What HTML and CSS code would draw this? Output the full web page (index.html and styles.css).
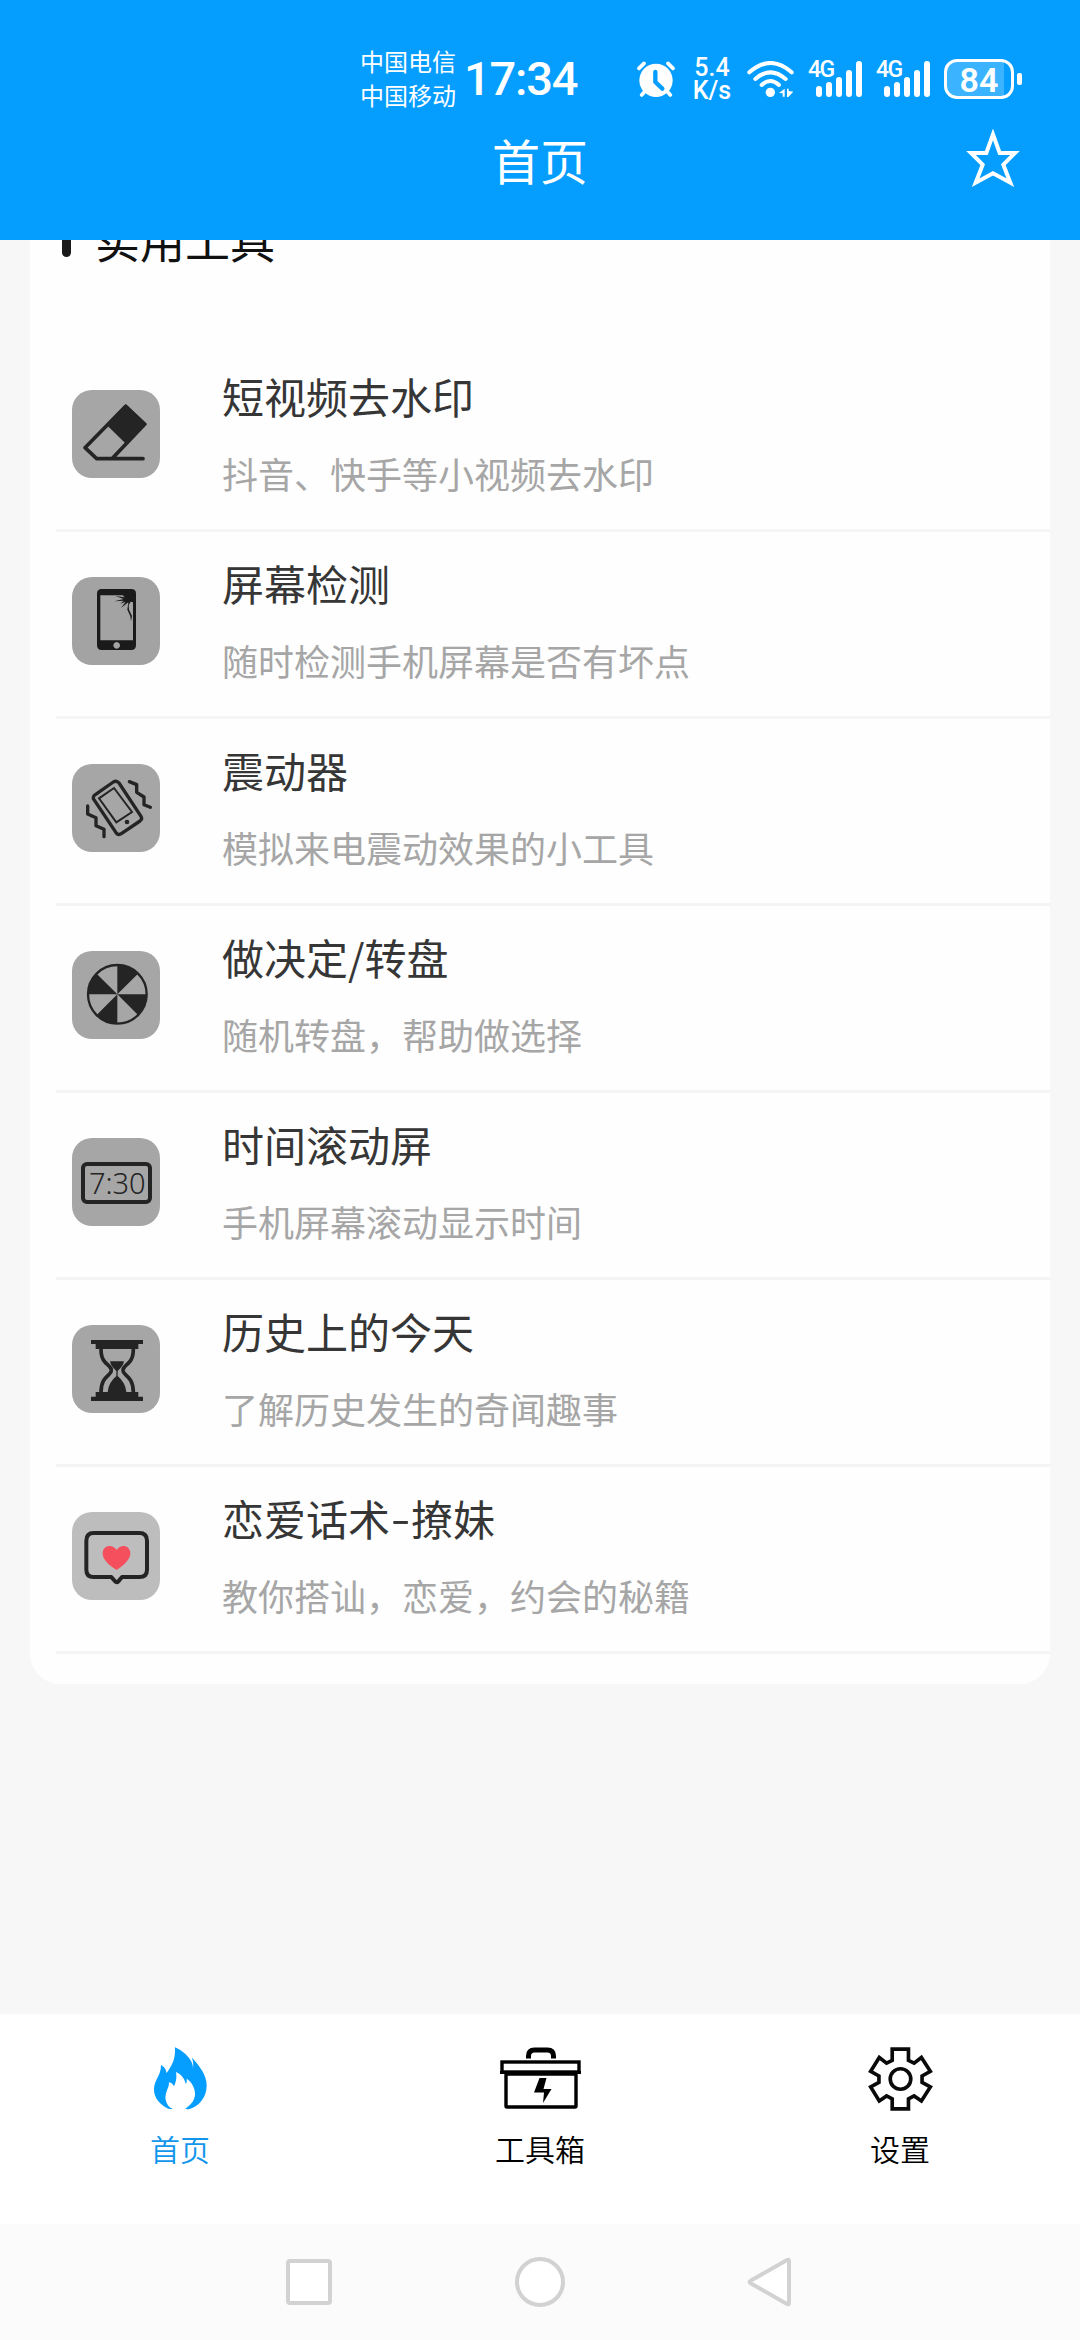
FILE: index.html
```html
<!DOCTYPE html>
<html lang="zh-CN">
<head>
<meta charset="utf-8">
<title>首页</title>
<link rel="stylesheet" href="styles.css">
</head>
<body>
<div class="app">
  <header class="header">
    <div class="status">
      <div class="carriers"><span>中国电信</span><span>中国移动</span></div>
      <div class="time">17:34</div>
      <svg class="alarm" viewBox="0 0 114 108" width="38" height="36">
        <g fill="none" stroke="#fff" stroke-width="11" stroke-linecap="round"><path d="M6 22 21 7M93 7l15 15M24 91 14 102M90 91l10 11"/></g>
        <circle cx="57" cy="58" r="50" fill="#fff"/>
        <path d="M55 33v30l21 20" fill="none" stroke="#059eff" stroke-width="13" stroke-linecap="round" stroke-linejoin="round"/>
      </svg>
      <div class="speed"><span>5.4</span><span>K/s</span></div>
      <svg class="wifi" viewBox="0 0 141 108" width="47" height="36">
        <g fill="none" stroke="#fff" stroke-width="12" stroke-linecap="round"><path d="M7 34Q70-22 134 34M25 54Q70 14 116 54M44 72Q70 48 96 72"/></g>
        <circle cx="70" cy="94" r="14" fill="#fff"/>
        <path d="M96 96 113 83v24h-6V97ZM120 83h5v7l14 2-15 16h-4Z" fill="#fff"/>
      </svg>
      <div class="signal"><span class="net">4G</span>
        <svg viewBox="0 0 46 36" width="46" height="36" fill="#fff"><rect y="25" width="6" height="11" rx="3"/><rect x="10" y="21" width="6" height="15" rx="3"/><rect x="20" y="16" width="6" height="20" rx="3"/><rect x="30" y="9" width="6" height="27" rx="3"/><rect x="40" width="6" height="36" rx="3"/></svg>
      </div>
      <div class="signal"><span class="net">4G</span>
        <svg viewBox="0 0 46 36" width="46" height="36" fill="#fff"><rect y="25" width="6" height="11" rx="3"/><rect x="10" y="21" width="6" height="15" rx="3"/><rect x="20" y="16" width="6" height="20" rx="3"/><rect x="30" y="9" width="6" height="27" rx="3"/><rect x="40" width="6" height="36" rx="3"/></svg>
      </div>
      <div class="battery">84</div>
      <div class="cap"></div>
    </div>
    <div class="bar">
      <h1>首页</h1>
      <svg class="star" viewBox="0 0 162 174" width="54" height="58"><path d="M81 16 101 72H147L112 107 133 161 81 133 29 161 50 107 15 72H61Z" fill="none" stroke="#fff" stroke-width="12"/></svg>
    </div>
  </header>

  <main class="content">
    <section class="card">
      <div class="section"><i class="mark"></i><h2>实用工具</h2></div>
      <ul class="list">
        <li class="row">
          <svg class="ico" viewBox="0 0 264 264"><g fill="none" stroke="#242424" stroke-width="11" stroke-linecap="round" stroke-linejoin="round"><path d="M39 173 161 49 218 103 122 204M39 173 74 206H213"/></g><path d="M161 42 225 102 160 160 105 106Z" fill="#242424"/></svg>
          <div class="info"><h3>短视频去水印</h3><p>抖音、快手等小视频去水印</p></div>
        </li>
        <li class="row">
          <svg class="ico ico-screen" viewBox="0 0 264 264"><path fill-rule="evenodd" fill="#1a1a1a" d="M89 36h89q14 0 14 14v155q0 14-14 14H89q-14 0-14-14V50q0-14 14-14ZM85 55v135h98V55ZM134 195a10 10 0 1 0 .1 0Z"/><path d="M152 54h32v22l-8-2-6 10 1 14 9 19-3 16-2-15-9-20 3-22-22 17 14-19-16 6 10-9-28 2 28-7-25-9 28 4Z" fill="#1a1a1a"/></svg>
          <div class="info"><h3>屏幕检测</h3><p>随时检测手机屏幕是否有坏点</p></div>
        </li>
        <li class="row">
          <svg class="ico" viewBox="0 0 264 264"><g fill="none" stroke="#242424" stroke-width="10" stroke-linejoin="round" stroke-linecap="round"><path d="M124 54 70 92q-10 7-4 15l66 99q7 9 16 3l56-38q8-6 3-14L141 57q-7-9-17-3Z"/><path d="M172 53 194 62V85L216 99V122L235 130M47 126V150L72 161V185L96 196V218"/></g><path d="M126 72 180 144 133 175 81 103Z" fill="none" stroke="#242424" stroke-width="6"/><circle cx="165" cy="174" r="7" fill="#242424"/></svg>
          <div class="info"><h3>震动器</h3><p>模拟来电震动效果的小工具</p></div>
        </li>
        <li class="row">
          <svg class="ico" viewBox="0 0 264 264"><circle cx="136" cy="130" r="88" fill="none" stroke="#242424" stroke-width="7"/><path fill="#242424" d="M136 130V42A88 88 0 0 1 198 68ZM136 130H224A88 88 0 0 1 198 192ZM136 130V218A88 88 0 0 1 74 192ZM136 130H48A88 88 0 0 1 74 68Z"/></svg>
          <div class="info"><h3>做决定/转盘</h3><p>随机转盘，帮助做选择</p></div>
        </li>
        <li class="row">
          <svg class="ico" viewBox="0 0 264 264"><rect x="33" y="78" width="201" height="114" rx="12" fill="none" stroke="#242424" stroke-width="12"/><text class="digits" x="51" y="168" textLength="170">7:30</text></svg>
          <div class="info"><h3>时间滚动屏</h3><p>手机屏幕滚动显示时间</p></div>
        </li>
        <li class="row">
          <svg class="ico" viewBox="0 0 264 264"><g fill="#242424"><path d="M57 45H213V57H199V72H71V57H57ZM71 201H199V215H213V228H57V215H71ZM114 109h42q-2 14-19 29v15q24 20 26 48h-56q2-28 26-48v-15q-17-15-19-29Z"/></g><path d="M87 72C87 104 99 113 112 124Q124 136 112 147C99 159 87 170 87 202M184 72C184 104 172 113 159 124Q147 136 159 147C172 159 184 170 184 202" fill="none" stroke="#242424" stroke-width="11"/></svg>
          <div class="info"><h3>历史上的今天</h3><p>了解历史发生的奇闻趣事</p></div>
        </li>
        <li class="row">
          <svg class="ico ico-chat" viewBox="0 0 264 264"><path d="M65 63H202Q225 63 225 86V173Q225 195 202 195H150L139 208Q134 214 129 208L118 195H65Q43 195 43 173V86Q43 63 65 63Z" fill="none" stroke="#242424" stroke-width="12" stroke-linejoin="round"/><path d="M134 174C108 158 92 142 92 124C92 100 121 94 134 114C146 94 175 100 175 124C175 142 158 158 134 174Z" fill="#f54f5d"/></svg>
          <div class="info"><h3>恋爱话术<span class="dash">-</span>撩妹</h3><p>教你搭讪，恋爱，约会的秘籍</p></div>
        </li>
      </ul>
    </section>
  </main>

  <nav class="tabs">
    <a class="tab active">
      <svg viewBox="0 0 160 192" width="53" height="64"><path fill="#059eff" d="M63 0C92 12 122 42 117 66Q121 50 114 31C138 57 159 84 159 116C159 152 134 180 105 187Q98 188 94 186C112 174 128 156 123 132C120 116 110 102 99 95Q100 104 96 111C92 94 82 82 66 75C70 90 66 108 60 118Q56 108 45 106C47 122 32 136 35 158C38 172 45 182 56 186Q50 188 42 185C18 174 0 154 0 128C0 98 22 86 21 54Q36 62 38 78C56 54 66 30 63 0Z"/></svg>
      <span>首页</span>
    </a>
    <a class="tab">
      <svg viewBox="0 0 81 64" width="81" height="64" fill="none" stroke="#000"><path d="M28.500 11.500V9q0-6 6-6h13q6 0 6 6v2.500" stroke-width="5"/><rect x="2" y="15" width="77" height="10" stroke-width="3.400"/><path d="M0 25.500H81" stroke-width="3"/><rect x="6" y="27" width="70" height="33" rx="1" stroke-width="3.400"/><path d="M39.500 31h7l-3 11h8L43 56l1-10.500H34Z" fill="#000" stroke="none"/></svg>
      <span>工具箱</span>
    </a>
    <a class="tab">
      <svg viewBox="0 0 196 192" width="65" height="64" fill="none" stroke="#0a0a0a" stroke-width="11"><path d="M73 6H122V40L139 48 161 31 188 73 163 87V106L188 120 161 162 139 147 122 156V186H73V156L56 147 34 162 8 120 33 106V87L8 73 34 31 56 48 73 40Z"/><circle cx="98" cy="96" r="31"/></svg>
      <span>设置</span>
    </a>
  </nav>
  <div class="sysnav">
    <svg viewBox="0 0 50 52" width="50" height="52"><rect x="4" y="5" width="42" height="42" rx="2"/></svg>
    <svg viewBox="0 0 50 52" width="50" height="52"><circle cx="25" cy="26" r="23"/></svg>
    <svg viewBox="0 0 50 52" width="50" height="52"><path d="M43 5V47Q43 49 41 48L5 27.500Q2 26 5 24.500L41 4Q43 3 43 5Z"/></svg>
  </div>
</div>
</body>
</html>
```
FILE: styles.css
```css
* { box-sizing: border-box; margin: 0; padding: 0; }
body { background: #f7f7f7; font-family: "Noto Sans CJK SC", sans-serif; }
h1, h2, h3 { font-weight: 400; }
svg { display: block; flex: none; }

.app { width: 1080px; height: 2340px; display: flex; flex-direction: column; overflow: hidden; }

.header { height: 240px; flex: none; background: #059eff; color: #fff; }
.status { height: 106px; padding: 52px 0 0 360px; display: flex; align-items: center; }
.carriers { width: 96px; margin-top: -3px; display: flex; flex-direction: column; font-size: 24px; line-height: 34px; white-space: nowrap; }
.time { width: 115px; margin-left: 8px; font: 500 47px/54px Roboto, sans-serif; letter-spacing: -1.2px; white-space: nowrap; }
.alarm { margin-left: 58px; }
.speed { width: 40px; margin-left: 17px; display: flex; flex-direction: column; align-items: center; font: 500 25px/22px Roboto, sans-serif; white-space: nowrap; }
.speed span + span { margin-top: 1px; }
.wifi { margin-left: 15px; }
.signal { width: 54px; height: 36px; margin-left: 14px; position: relative; display: flex; justify-content: flex-end; }
.net { position: absolute; left: 0; top: 0; font: 500 23px/18px Roboto, sans-serif; letter-spacing: -1.5px; }
.battery { width: 70px; height: 40px; margin-left: 14px; border: 3px solid #fff; border-radius: 13px; background: linear-gradient(90deg, #3cb3ff 57px, #059eff 57px); font: 600 34px/36px Roboto, sans-serif; text-align: center; }
.cap { width: 5px; height: 12px; margin-left: 3px; border-radius: 2px; background: #fff; }
.bar { height: 103px; padding: 0 60px 0 114px; display: flex; align-items: center; }
.bar h1 { flex: 1; margin-top: 3px; font-size: 48px; line-height: 60px; text-align: center; }

.content { flex: 1; overflow: hidden; padding: 0 30px; }
.card { height: 1444px; background: #fefefe; border-radius: 0 0 30px 30px; padding-left: 26px; }
.section { height: 105px; display: flex; padding-left: 6px; }
.mark { width: 9px; height: 37px; margin-top: -20px; border-radius: 5px; background: #1a1a1a; }
.section h2 { margin: -33px 0 0 24px; height: 66px; font-size: 45px; line-height: 66px; color: #111; }
.list { list-style: none; }
.row { height: 187px; border-bottom: 3px solid #f4f4f4; padding-left: 16px; display: flex; }
.ico { width: 88px; height: 88px; margin-top: 45px; border-radius: 20px; background: #a6a6a6; }
.ico-screen { background: #a3a3a3; }
.ico-chat { background: #bdbdbd; }
.digits { font-family: "Noto Sans", sans-serif; font-size: 87px; font-weight: 300; fill: #242424; }
.info { margin-left: 62px; padding-top: 21px; }
.info h3 { font-size: 42px; line-height: 60px; color: #363636; }
.info p { margin-top: 21px; font-size: 36px; line-height: 52px; color: #a6a6a6; }
.dash { display: inline-block; width: 21px; text-align: center; transform: translateY(-2px) scaleX(1.35); }

.tabs { height: 210px; flex: none; background: #fff; display: flex; }
.tab { flex: 1; padding-top: 33px; display: flex; flex-direction: column; align-items: center; font-size: 30px; line-height: 44px; color: #000; }
.tab span { margin-top: 15px; font-weight: 350; }
.active { color: #1296eb; }
.sysnav { height: 116px; flex: none; background: #fbfbfb; display: flex; justify-content: center; gap: 181px; padding-top: 32px; }
.sysnav svg { fill: #fff; stroke: #d2d2d2; stroke-width: 4; }
```
